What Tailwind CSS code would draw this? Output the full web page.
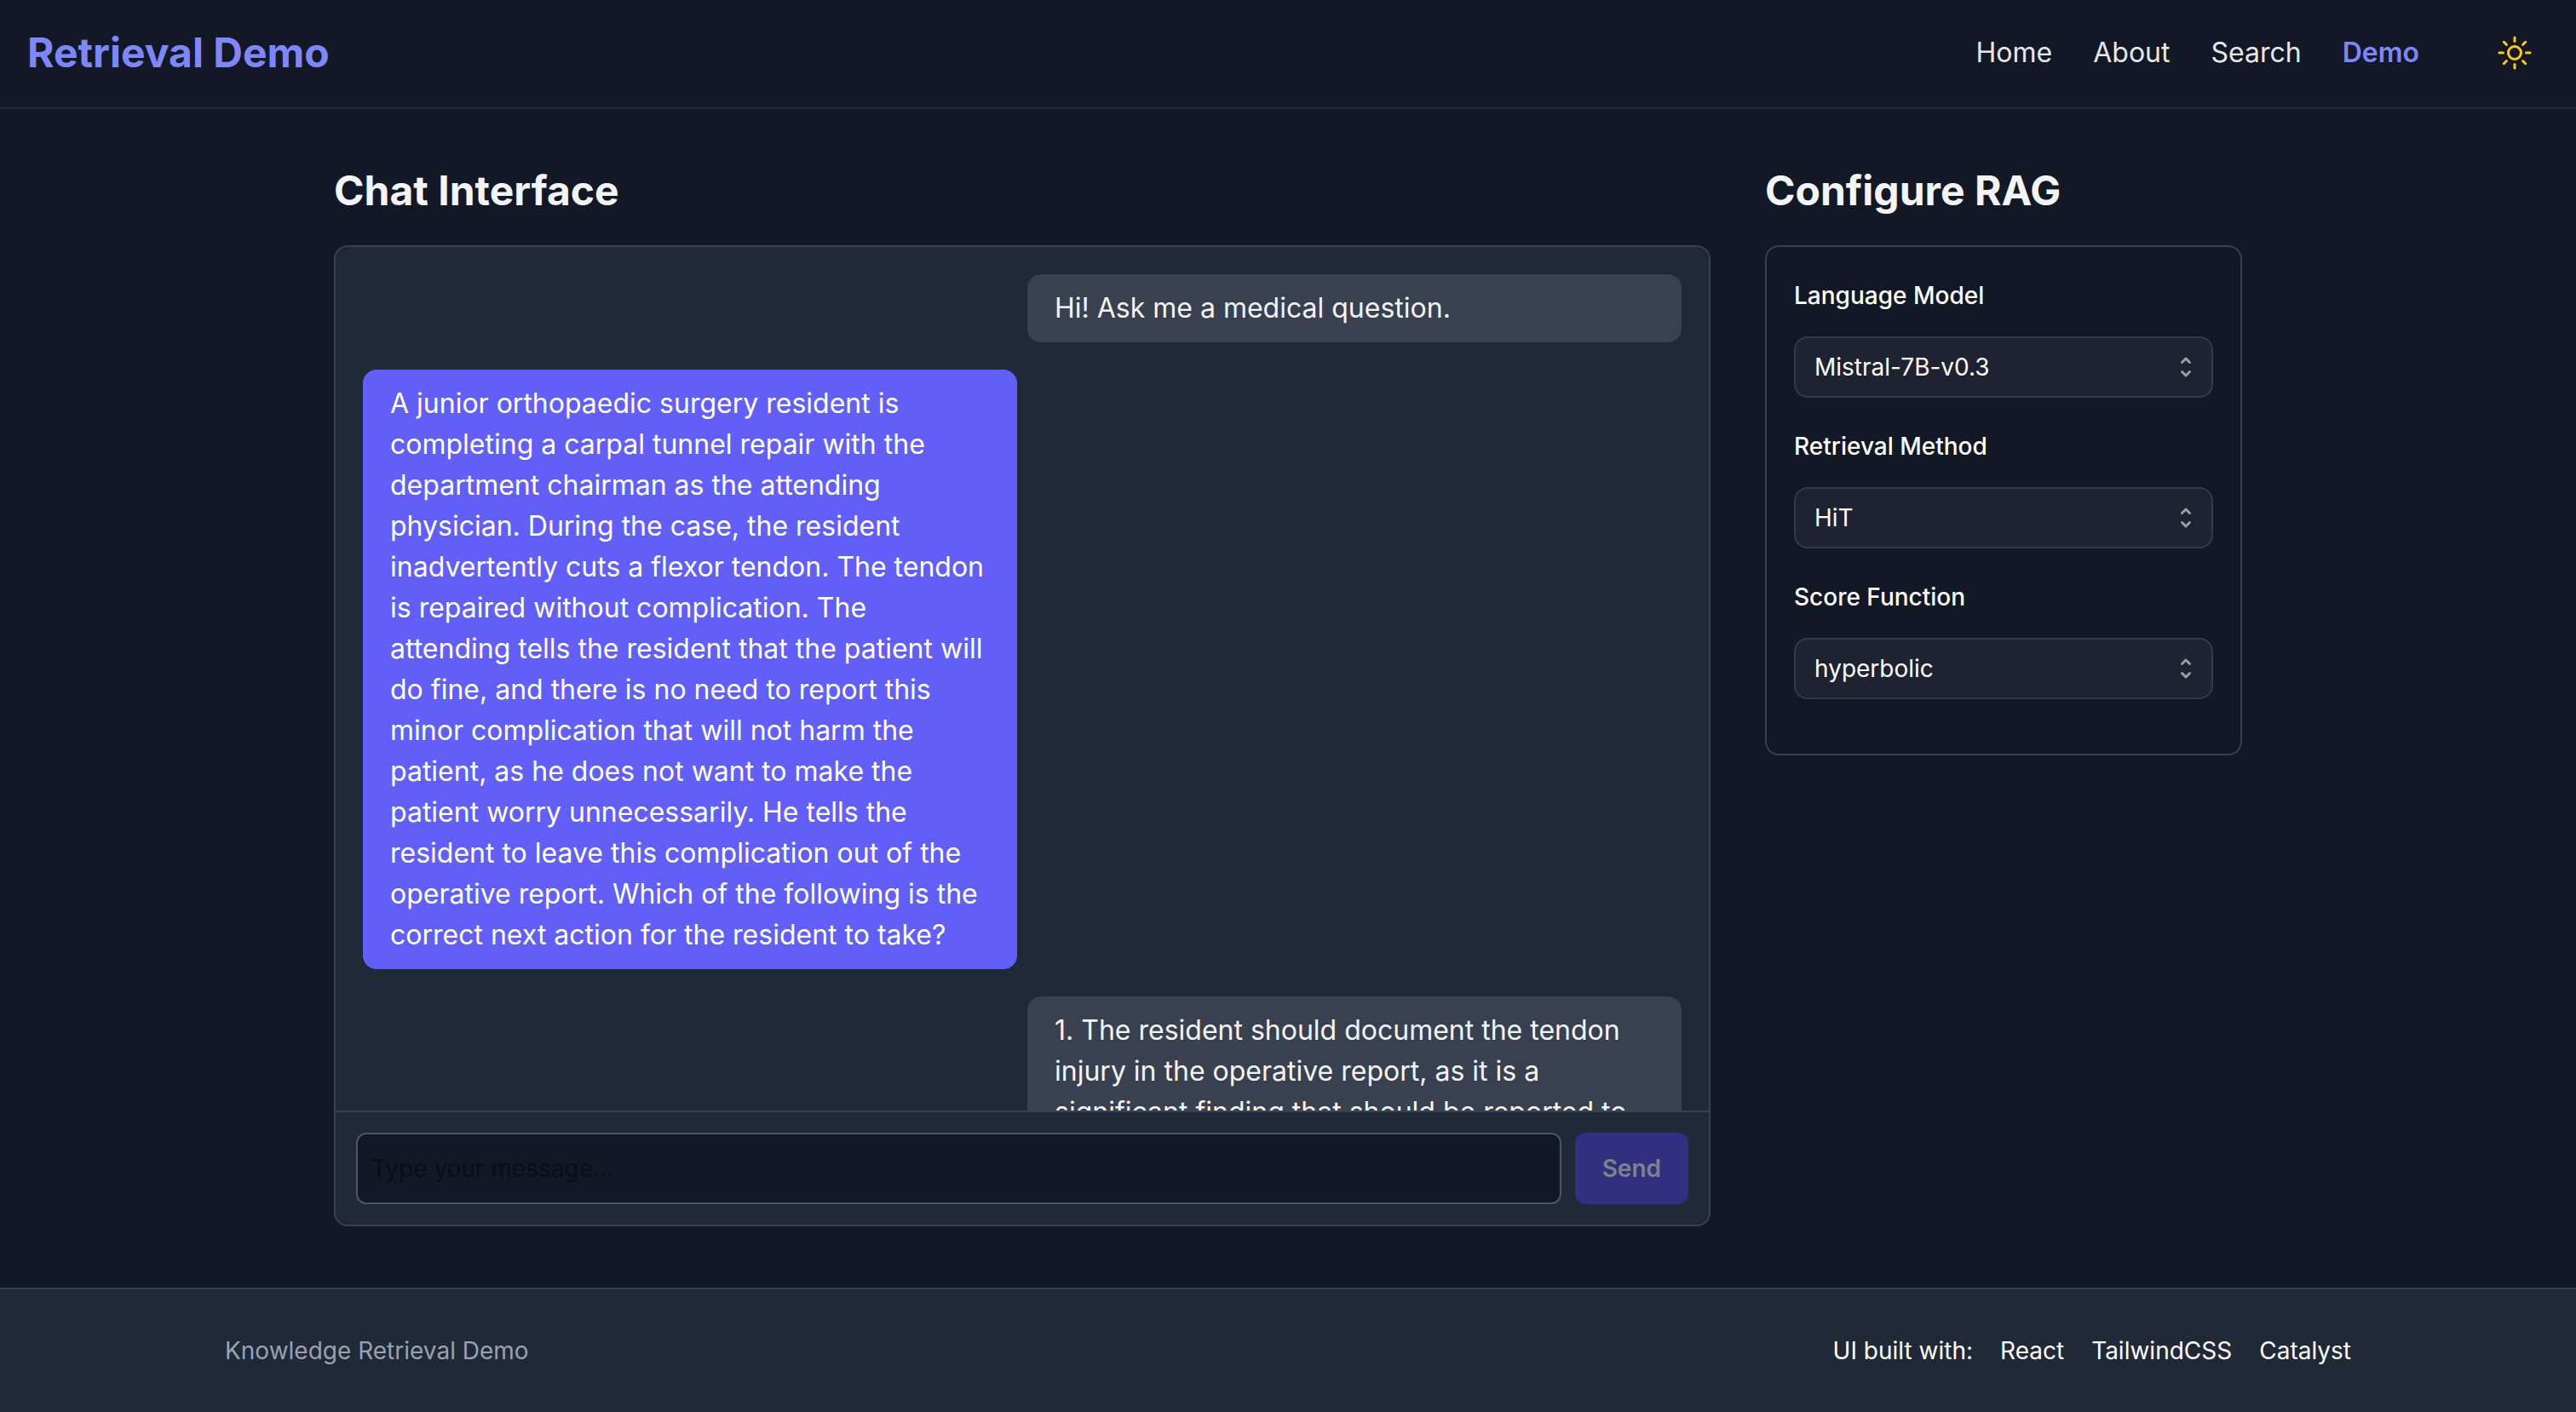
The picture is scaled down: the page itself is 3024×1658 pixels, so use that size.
<!DOCTYPE html>
<html lang="en">
<head>
<meta charset="utf-8">
<meta name="viewport" content="width=device-width, initial-scale=1">
<title>Retrieval Demo</title>
<script src="https://cdn.jsdelivr.net/npm/@tailwindcss/browser@4"></script>
</head>
<body class="flex min-h-screen flex-col bg-[#121826] font-['Inter',sans-serif] text-[32px] leading-[48px] text-gray-100">
  <header class="flex items-center justify-between border-b-2 border-[#202937] px-8 pt-[30px] pb-8">
    <a href="#" class="text-5xl leading-[64px] font-bold text-[#7e87fa]">Retrieval Demo</a>
    <div class="flex items-center gap-20 pr-2">
      <nav class="flex gap-12 text-gray-200">
        <a href="#">Home</a>
        <a href="#">About</a>
        <a href="#">Search</a>
        <a href="#" class="font-semibold text-[#7e87fa]">Demo</a>
      </nav>
      <button type="button" aria-label="Toggle theme" class="mx-2 text-[#fbcb14]">
        <svg class="size-12" viewBox="0 0 24 24" fill="none" stroke="currentColor" stroke-width="1.5" stroke-linecap="round" stroke-linejoin="round"><path d="M12 3v2.25m6.364.386-1.591 1.591M21 12h-2.25m-.386 6.364-1.591-1.591M12 18.75V21m-4.773-4.227-1.591 1.591M5.25 12H3m4.227-4.773L5.636 5.636M15.75 12a3.75 3.75 0 1 1-7.5 0 3.75 3.75 0 0 1 7.5 0Z"/></svg>
      </button>
    </div>
  </header>

  <main class="mx-auto flex w-full max-w-[2304px] grow items-start gap-16 px-8 py-16">
    <section class="min-w-0 grow">
      <h2 class="mb-8 text-5xl leading-[64px] font-bold">Chat Interface</h2>
      <div class="flex flex-col overflow-hidden rounded-2xl border-2 border-[#394150] bg-[#202937]">
        <div class="flex h-[1014px] flex-col gap-8 overflow-hidden p-8">
          <p class="w-[768px] shrink-0 self-end rounded-2xl bg-[#394150] px-8 py-4">Hi! Ask me a medical question.</p>
          <p class="w-[768px] shrink-0 self-start rounded-2xl bg-[#625ff8] px-8 py-4 text-white">A junior orthopaedic surgery resident is completing a carpal tunnel repair with the department chairman as the attending physician. During the case, the resident inadvertently cuts a flexor tendon. The tendon is repaired without complication. The attending tells the resident that the patient will do fine, and there is no need to report this minor complication that will not harm the patient, as he does not want to make the patient worry unnecessarily. He tells the resident to leave this complication out of the operative report. Which of the following is the correct next action for the resident to take?</p>
          <p class="w-[768px] shrink-0 self-end rounded-2xl bg-[#394150] px-8 py-4">1. The resident should document the tendon injury in the operative report, as it is a significant finding that should be reported to</p>
        </div>
        <form class="flex gap-4 border-t-2 border-[#394150] p-6">
          <input type="text" aria-label="Message" placeholder="Type your message..." class="h-[84px] min-w-0 grow rounded-xl border-2 border-[#4c5563] bg-[#121826] px-4 text-[28px] text-gray-100 placeholder:text-[#0a0e15]">
          <button type="submit" disabled class="rounded-xl bg-[#322f80] px-8 text-[28px] font-semibold text-[#7d8389]">Send</button>
        </form>
      </div>
    </section>

    <aside class="w-[560px] shrink-0">
      <h2 class="mb-8 text-5xl leading-[64px] font-bold">Configure RAG</h2>
      <div class="flex flex-col gap-[33px] rounded-2xl border-2 border-[#394150] px-8 pt-[33px] pb-16 text-[28px] text-white">
        <div class="flex flex-col gap-6">
          <label for="model" class="font-medium">Language Model</label>
          <div class="grid items-center">
            <select id="model" class="col-start-1 row-start-1 h-[72px] appearance-none rounded-2xl border-2 border-white/10 bg-white/5 px-[22px]"><option>Mistral-7B-v0.3</option></select>
            <svg class="pointer-events-none col-start-1 row-start-1 mr-4 size-8 justify-self-end stroke-[#9d9da6]" viewBox="0 0 16 16" fill="none" stroke-width="1.5" stroke-linecap="round" stroke-linejoin="round"><path d="M5.75 10.75L8 13L10.25 10.75M10.25 5.25L8 3L5.75 5.25"/></svg>
          </div>
        </div>
        <div class="flex flex-col gap-6">
          <label for="method" class="font-medium">Retrieval Method</label>
          <div class="grid items-center">
            <select id="method" class="col-start-1 row-start-1 h-[72px] appearance-none rounded-2xl border-2 border-white/10 bg-white/5 px-[22px]"><option>HiT</option></select>
            <svg class="pointer-events-none col-start-1 row-start-1 mr-4 size-8 justify-self-end stroke-[#9d9da6]" viewBox="0 0 16 16" fill="none" stroke-width="1.5" stroke-linecap="round" stroke-linejoin="round"><path d="M5.75 10.75L8 13L10.25 10.75M10.25 5.25L8 3L5.75 5.25"/></svg>
          </div>
        </div>
        <div class="flex flex-col gap-6">
          <label for="score" class="font-medium">Score Function</label>
          <div class="grid items-center">
            <select id="score" class="col-start-1 row-start-1 h-[72px] appearance-none rounded-2xl border-2 border-white/10 bg-white/5 px-[22px]"><option>hyperbolic</option></select>
            <svg class="pointer-events-none col-start-1 row-start-1 mr-4 size-8 justify-self-end stroke-[#9d9da6]" viewBox="0 0 16 16" fill="none" stroke-width="1.5" stroke-linecap="round" stroke-linejoin="round"><path d="M5.75 10.75L8 13L10.25 10.75M10.25 5.25L8 3L5.75 5.25"/></svg>
          </div>
        </div>
      </div>
    </aside>
  </main>

  <footer class="border-t-2 border-[#394150] bg-[#202937] py-12 text-[28px]">
    <div class="mx-auto flex w-full max-w-[2560px] items-center justify-between px-8">
      <p class="text-[#9ba1ae]">Knowledge Retrieval Demo</p>
      <div class="flex gap-8 text-white">
        <span>UI built with:</span>
        <a href="#">React</a>
        <a href="#">TailwindCSS</a>
        <a href="#">Catalyst</a>
      </div>
    </div>
  </footer>
</body>
</html>
